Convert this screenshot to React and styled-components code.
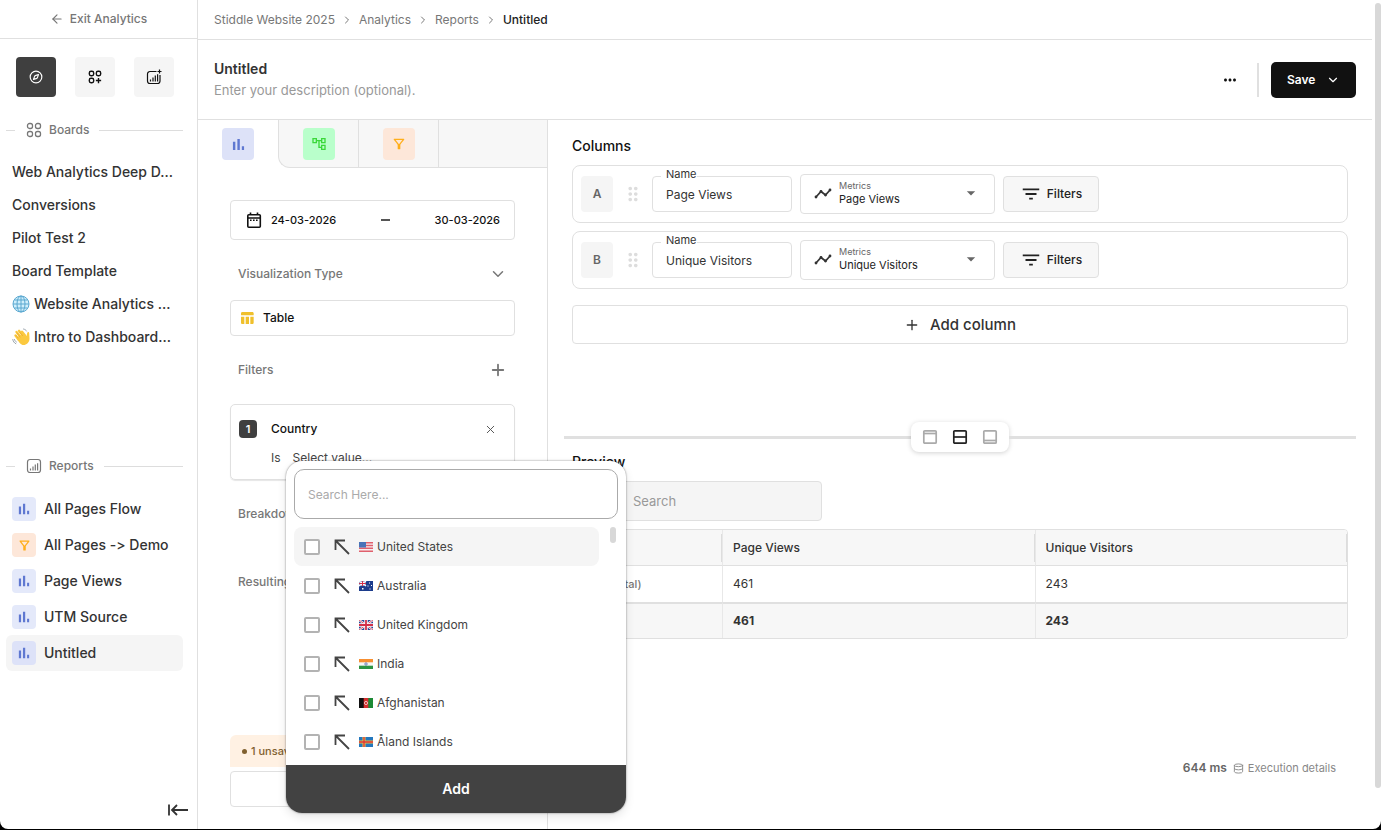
import { useState } from "react";
import styled, { createGlobalStyle } from "styled-components";
import {
  MdOutlineFilterAlt,
  MdOutlineAccountTree,
  MdTableChart,
  MdDragIndicator,
  MdFilterList,
  MdArrowDropDown,
  MdMoreHoriz,
  MdSearch,
} from "react-icons/md";
import { ArrowLeft, ChevronDown, ChevronRight, Compass, Database, Plus, X } from "lucide-react";

const GlobalStyle = createGlobalStyle`
  * {
    box-sizing: border-box;
  }
  body {
    margin: 0;
    background: #000;
    color: #333;
    font-family: Inter, "Liberation Sans", sans-serif;
    font-size: 12px;
    font-variant-ligatures: no-contextual;
    line-height: 20px;
  }
  button, input, select {
    font: inherit;
    color: inherit;
    margin: 0;
  }
  button {
    padding: 0;
    border: none;
    background: none;
    cursor: pointer;
  }
  input, select {
    min-width: 0;
    padding: 0;
    border: none;
    outline: none;
    background: transparent;
  }
  a {
    color: inherit;
    text-decoration: none;
  }
  ul, ol {
    list-style: none;
    margin: 0;
    padding: 0;
  }
  h1, h2, h3, p {
    margin: 0;
  }
  svg {
    display: block;
    flex-shrink: 0;
  }
`;

const Shell = styled.div`
  display: flex;
  min-height: calc(100vh - 1px);
  background: #fff;
  border-radius: 0 0 8px 8px;
`;

/* ---------- sidebar ---------- */

const Sidebar = styled.aside`
  display: flex;
  flex-direction: column;
  flex: 0 0 198px;
  border-right: 1px solid #e0e0e0;
`;

const ExitLink = styled.a`
  display: flex;
  align-items: center;
  justify-content: center;
  gap: 6px;
  height: 39px;
  border-bottom: 1px solid #e0e0e0;
  color: #777;
  font-weight: 500;
`;

const QuickNav = styled.nav`
  display: flex;
  justify-content: space-between;
  padding: 18px 23px 18px 16px;
`;

const QuickButton = styled.button`
  display: flex;
  align-items: center;
  justify-content: center;
  width: 40px;
  height: 40px;
  border-radius: 4px;
  background: ${(props) => (props.$active ? "#3f3f3f" : "#f5f5f5")};
  color: ${(props) => (props.$active ? "#fff" : "#111")};
`;

const SideSection = styled.section`
  flex: 1;
  padding: 5px 14px 0 6px;
`;

const SideHeading = styled.h2`
  display: flex;
  align-items: center;
  margin-bottom: 15px;
  color: #777;
  font-size: 12px;
  font-weight: 500;
  &::before {
    content: "";
    width: 9px;
    margin-right: 11px;
    border-top: 1px solid #ddd;
  }
  &::after {
    content: "";
    flex: 1;
    margin-left: 10px;
    border-top: 1px solid #ddd;
  }
  svg {
    margin-right: 7px;
  }
`;

const BoardLink = styled.a`
  display: flex;
  align-items: center;
  gap: 4px;
  height: 33px;
  padding: 0 6px;
  font-size: 14px;
  font-weight: 500;
  white-space: nowrap;
`;

const ReportLink = styled.a`
  display: flex;
  align-items: center;
  gap: 8px;
  height: 36px;
  padding: 0 6px;
  border-radius: 6px;
  background: ${(props) => (props.$active ? "#f5f5f5" : "transparent")};
  font-size: 14px;
  font-weight: 500;
  white-space: nowrap;
`;

const tones = {
  blue: ["#e4e9fa", "#5f78d1"],
  indigo: ["#dde2f8", "#5f78d1"],
  green: ["#b9ffcb", "#3ad83a"],
  orange: ["#fde7d9", "#ffae1a"],
};

const IconBadge = styled.span`
  display: flex;
  align-items: center;
  justify-content: center;
  width: ${(props) => (props.$large ? "32px" : "24px")};
  height: ${(props) => (props.$large ? "32px" : "24px")};
  border-radius: 4px;
  background: ${(props) => tones[props.$tone][0]};
  color: ${(props) => tones[props.$tone][1]};
`;

const CollapseButton = styled.button`
  align-self: flex-end;
  margin: 15px 8px 11px;
`;

/* ---------- header ---------- */

const Content = styled.div`
  display: flex;
  flex-direction: column;
  flex: 1;
  min-width: 0;
`;

const Breadcrumbs = styled.nav`
  border-bottom: 1px solid #e0e0e0;
  color: #777;
  ol {
    display: flex;
    align-items: center;
    height: 39px;
    padding: 0 16px;
  }
  li {
    display: flex;
    align-items: center;
  }
  svg {
    margin: 0 6px;
  }
`;

const Crumb = styled.a`
  color: ${(props) => (props.$current ? "#222" : "#777")};
  font-weight: ${(props) => (props.$current ? 500 : 400)};
`;

const ReportHeader = styled.header`
  display: flex;
  align-items: center;
  height: 80px;
  padding: 0 16px;
  border-bottom: 1px solid #e0e0e0;
`;

const TitleBlock = styled.div`
  display: flex;
  flex-direction: column;
  flex: 1;
`;

const Title = styled.h1`
  font-size: 14px;
  font-weight: 600;
`;

const Description = styled.input`
  width: 100%;
  height: 22px;
  font-size: 13px;
  &::placeholder {
    color: #999;
    opacity: 1;
  }
`;

const HeaderDivider = styled.span`
  width: 2px;
  height: 34px;
  margin: 0 12px 0 18px;
  background: #e0e0e0;
`;

const SaveButton = styled.button`
  display: flex;
  align-items: center;
  justify-content: space-between;
  width: 85px;
  height: 36px;
  padding: 0 16px;
  border-radius: 5px;
  background: #111;
  color: #fff;
  font-weight: 600;
`;

const Workspace = styled.div`
  display: flex;
  flex: 1;
`;

/* ---------- settings panel ---------- */

const Settings = styled.section`
  display: flex;
  flex-direction: column;
  flex: 0 0 350px;
  border-right: 1px solid #e0e0e0;
`;

const Tabs = styled.div`
  display: flex;
  height: 48px;
`;

const InactiveTabs = styled.div`
  display: flex;
  flex: 1;
  border-left: 1px solid #e0e0e0;
  border-bottom: 1px solid #e0e0e0;
  border-bottom-left-radius: 12px;
  background: #f7f7f7;
`;

const Tab = styled.button`
  display: flex;
  align-items: center;
  justify-content: center;
  width: 80px;
  border-right: ${(props) => (props.$active ? "none" : "1px solid #e0e0e0")};
`;

const SettingsBody = styled.div`
  display: flex;
  flex-direction: column;
  flex: 1;
  padding: 32px 32px 22px;
`;

const DateBox = styled.button`
  display: flex;
  align-items: center;
  height: 40px;
  padding: 0 14px;
  border: 1px solid #e0e0e0;
  border-radius: 4px;
  color: #111;
  font-size: 11px;
  font-weight: 500;
  svg {
    margin-right: 8px;
  }
`;

const Dash = styled.span`
  width: 9px;
  height: 2px;
  margin: 0 auto;
  background: #555;
`;

const SectionHead = styled.div`
  display: flex;
  align-items: center;
  justify-content: space-between;
  height: 28px;
  margin: ${(props) => props.$space};
  padding: 0 8px;
  color: #777;
  h3 {
    font-size: 12px;
    font-weight: 500;
  }
`;

const VisualButton = styled.button`
  display: flex;
  align-items: center;
  gap: 8px;
  height: 36px;
  padding: 0 8px;
  border: 1px solid #e0e0e0;
  border-radius: 4px;
  color: #111;
  font-weight: 500;
`;

const FilterCard = styled.div`
  position: relative;
  height: 76px;
  padding: 14px 17px 0 8px;
  border: 1px solid #e0e0e0;
  border-radius: 5px;
  box-shadow: 0 1px 1px rgba(0, 0, 0, 0.1);
`;

const FilterTop = styled.div`
  display: flex;
  align-items: center;
  color: #111;
  font-weight: 500;
  button {
    margin-left: auto;
    color: #555;
  }
`;

const FilterNumber = styled.span`
  width: 18px;
  height: 18px;
  margin-right: 14px;
  border-radius: 4px;
  background: #3f3f3f;
  color: #fff;
  font-size: 11px;
  font-weight: 600;
  line-height: 18px;
  text-align: center;
`;

const FilterRule = styled.div`
  display: flex;
  gap: 12px;
  padding: 9px 0 0 32px;
  color: #444;
`;

const Unsaved = styled.p`
  display: flex;
  align-items: center;
  gap: 4px;
  margin-top: auto;
  padding: 6px 12px;
  border-radius: 6px 6px 0 0;
  background: #fff1e3;
  color: #80602f;
  font-size: 11px;
  font-weight: 500;
  &::before {
    content: "";
    width: 5px;
    height: 5px;
    border-radius: 50%;
    background: currentColor;
  }
`;

const DiscardButton = styled.button`
  height: 36px;
  margin-top: 4px;
  border: 1px solid #e0e0e0;
  border-radius: 4px;
  font-weight: 500;
`;

/* ---------- country popover ---------- */

const Popover = styled.div`
  position: absolute;
  top: 56px;
  left: 55px;
  z-index: 10;
  width: 340px;
  padding-top: 8px;
  border-radius: 16px;
  background: #fff;
  box-shadow: 0 0 2px rgba(0, 0, 0, 0.5), 0 4px 10px rgba(0, 0, 0, 0.1);
  overflow: hidden;
`;

const PopoverSearch = styled.input`
  display: block;
  width: calc(100% - 16px);
  height: 50px;
  margin: 0 8px 8px;
  padding: 0 13px;
  border: 1px solid #aaa;
  border-radius: 10px;
  &::placeholder {
    color: #aaa;
    opacity: 1;
  }
`;

const OptionArea = styled.div`
  display: flex;
  justify-content: space-between;
  padding: 0 10px 4px 8px;
`;

const Options = styled.ul`
  flex: 1;
  margin-right: 11px;
`;

const Option = styled.label`
  display: flex;
  align-items: center;
  height: 39px;
  padding: 0 10px;
  border-radius: 8px;
  background: ${(props) => (props.$hover ? "#f5f5f5" : "transparent")};
  color: #444;
  cursor: pointer;
  input {
    appearance: none;
    width: 16px;
    height: 16px;
    margin-right: 14px;
    border: 2px solid #b3b3b3;
    border-radius: 2px;
    background: #fff;
  }
  input:checked {
    background: #3f3f3f;
  }
`;

const OptionName = styled.span`
  display: flex;
  align-items: center;
  gap: 4px;
  margin-left: 9px;
`;

const Thumb = styled.span`
  width: 6px;
  height: ${(props) => props.$height};
  border-radius: 3px;
  background: #d8d8d8;
`;

const AddButton = styled.button`
  width: 100%;
  height: 48px;
  background: #424242;
  color: #fff;
  font-size: 14px;
  font-weight: 600;
`;

/* ---------- columns ---------- */

const Builder = styled.main`
  display: flex;
  flex-direction: column;
  flex: 1;
  min-width: 0;
`;

const Columns = styled.section`
  display: flex;
  flex-direction: column;
  padding: 16px 24px 78px;
`;

const Heading = styled.h2`
  margin-bottom: 9px;
  color: #111;
  font-size: 14px;
  font-weight: 500;
`;

const ColumnRow = styled.div`
  display: flex;
  align-items: center;
  gap: 8px;
  height: 58px;
  margin-bottom: 8px;
  padding: 0 8px;
  border: 1px solid #e0e0e0;
  border-radius: 8px;
`;

const Letter = styled.span`
  width: 32px;
  border-radius: 4px;
  background: #f5f5f5;
  color: #666;
  font-weight: 600;
  line-height: 36px;
  text-align: center;
`;

const DragHandle = styled.button`
  display: flex;
  align-items: center;
  justify-content: center;
  width: 23px;
  color: #ddd;
`;

const NameField = styled.div`
  position: relative;
  width: 140px;
  label {
    position: absolute;
    top: -10px;
    left: 9px;
    padding-left: 5px;
    background: #fff;
    font-size: 11px;
    line-height: 16px;
  }
  input {
    width: 100%;
    height: 36px;
    padding: 0 13px;
    border: 1px solid #e0e0e0;
    border-radius: 4px;
  }
`;

const MetricField = styled.div`
  display: flex;
  align-items: center;
  width: 195px;
  height: 40px;
  padding: 0 13px 2px;
  border: 1px solid #e0e0e0;
  border-radius: 4px;
`;

const MetricText = styled.div`
  display: flex;
  flex-direction: column;
  flex: 1;
  margin-left: 7px;
  label {
    color: #666;
    font-size: 9px;
    line-height: 12px;
  }
  select {
    appearance: none;
    height: 14px;
    color: #222;
    font-size: 11px;
    line-height: 14px;
  }
`;

const FiltersButton = styled.button`
  display: flex;
  align-items: center;
  justify-content: center;
  gap: 5px;
  width: 96px;
  height: 36px;
  border: 1px solid #e0e0e0;
  border-radius: 4px;
  background: #f7f7f7;
  color: #222;
  font-weight: 500;
`;

const AddColumn = styled.button`
  display: flex;
  align-items: center;
  justify-content: center;
  gap: 10px;
  height: 39px;
  margin-top: 8px;
  border: 1px solid #e0e0e0;
  border-radius: 4px;
  font-size: 15px;
  font-weight: 500;
`;

const Splitter = styled.div`
  display: flex;
  align-items: center;
  height: 30px;
  margin: 0 16px;
  &::before,
  &::after {
    content: "";
    flex: 1;
    height: 3px;
    background: #e0e0e0;
  }
`;

const LayoutToggle = styled.div`
  display: flex;
  align-items: center;
  gap: 14px;
  height: 30px;
  padding: 0 11px;
  border-radius: 8px;
  background: #fff;
  box-shadow: 0 1px 5px rgba(0, 0, 0, 0.18);
`;

const ToggleButton = styled.button`
  color: ${(props) => (props.$active ? "#222" : "#aaa")};
`;

/* ---------- preview ---------- */

const Preview = styled.section`
  display: flex;
  flex-direction: column;
  flex: 1;
  padding: 0 24px 51px;
`;

const TableSearch = styled.div`
  display: flex;
  align-items: center;
  gap: 16px;
  width: 250px;
  height: 40px;
  margin-bottom: 8px;
  padding: 0 24px;
  border: 1px solid #e0e0e0;
  border-radius: 4px;
  background: #f5f5f5;
  color: #999;
  font-size: 13px;
  input::placeholder {
    color: #999;
    opacity: 1;
  }
`;

const Results = styled.table`
  width: 100%;
  table-layout: fixed;
  border: 1px solid #e0e0e0;
  border-radius: 4px;
  border-spacing: 0;
  overflow: hidden;
  th,
  td {
    height: 36px;
    padding: 0 10px;
    text-align: left;
  }
  th:first-child {
    width: 149px;
  }
  th + th,
  td + td {
    border-left: 1px solid #e8e8e8;
  }
  thead th {
    position: relative;
    background: #f7f7f7;
    border-bottom: 1px solid #e0e0e0;
    font-weight: 500;
  }
  thead th::after {
    content: "";
    position: absolute;
    top: 4px;
    right: 0;
    width: 1px;
    height: 28px;
    background: #ddd;
  }
  tbody td:first-child {
    color: #777;
    font-size: 11px;
    font-weight: 500;
  }
  tfoot td {
    background: #f7f7f7;
    border-top: 2px solid #e0e0e0;
    font-weight: 700;
  }
`;

const Execution = styled.div`
  display: flex;
  align-items: center;
  justify-content: flex-end;
  margin-top: auto;
  padding-right: 12px;
  color: #666;
  strong {
    font-weight: 600;
  }
  button {
    display: flex;
    align-items: center;
    gap: 4px;
    margin-left: 6px;
    color: #888;
    font-size: 11px;
  }
`;

const Scrollbar = styled.div`
  display: flex;
  flex: 0 0 9px;
  justify-content: flex-end;
  align-items: flex-start;
  padding-top: 3px;
`;

const PageThumb = styled(Thumb)`
  height: calc(100vh - 45px);
`;

/* ---------- drawings ---------- */

const BarsIcon = ({ size = 13 }) => (
  <svg width={size} height={size} viewBox="0 0 14 14" fill="currentColor">
    <path d="M1 4h2.6v9H1zM5.8 1h2.6v12H5.8zM10.6 9h2.4v4h-2.4z" />
  </svg>
);

const BoardsIcon = ({ size = 16, plus }) => (
  <svg width={size} height={size} viewBox="0 0 16 16" fill="none" stroke="currentColor" strokeWidth={plus ? 1.6 : 1.3}>
    <rect x="1.5" y="1.5" width="5" height="5" rx="2" />
    <rect x="9.5" y="1.5" width="5" height="5" rx="2" />
    <rect x="1.5" y="9.5" width="5" height="5" rx="2" />
    {plus ? <path d="M12 9v6M9 12h6" /> : <rect x="9.5" y="9.5" width="5" height="5" rx="2" />}
  </svg>
);

const ReportsIcon = ({ size = 16, plus }) => (
  <svg width={size} height={size} viewBox="0 0 16 16" fill="none" stroke="currentColor" strokeWidth="1.2">
    {plus ? (
      <path d="M10.5 2.500H4a2.500 2.500 0 0 0-2.500 2.500v7A2.500 2.500 0 0 0 4 14.500h7.500A2.500 2.500 0 0 0 14 12V6M13.500 .5v4M11.500 2.500h4" />
    ) : (
      <rect x="1.500" y="1.500" width="13" height="13" rx="2.500" />
    )}
    <path d="M4.500 10.500v2M7 8.500v4M9.300 6.500v6M11.600 5.200v7.300" />
  </svg>
);

const CalendarIcon = () => (
  <svg width="18" height="18" viewBox="0 0 18 18" fill="none" stroke="currentColor" strokeWidth="1.6">
    <rect x="2.800" y="3.800" width="12.500" height="12.500" rx="1" />
    <path d="M3 7h12M5.500 1.500v2.500M12.500 1.500v2.500" />
    <path d="M5 9.300h8" strokeDasharray="1.600 1.400" />
  </svg>
);

const CollapseIcon = () => (
  <svg width="22" height="16" viewBox="0 0 22 16" fill="none" stroke="#333" strokeWidth="1.800">
    <path d="M2 2.500v11M21 8H5.500M10 3L5 8l5 5" />
  </svg>
);

const NorthWestIcon = () => (
  <svg width="16" height="16" viewBox="0 0 16 16" fill="none" stroke="#444" strokeWidth="1.800">
    <path d="M1.500 11V1.500H11M1.500 1.500L15 15" />
  </svg>
);

const TrendIcon = () => (
  <svg width="18" height="16" viewBox="0 0 18 16" fill="none" stroke="#333" strokeWidth="1.700">
    <path d="M2 12l5-5.500 4.500 3.500L16 5" />
    <g fill="#333" stroke="none">
      <circle cx="2" cy="12" r="1.400" />
      <circle cx="7" cy="6.500" r="1.400" />
      <circle cx="11.500" cy="10" r="1.400" />
      <circle cx="16" cy="5" r="1.400" />
    </g>
  </svg>
);

const PaneIcon = ({ line }) => (
  <svg width="16" height="16" viewBox="0 0 16 16" fill="none" stroke="currentColor" strokeWidth="1.700">
    <rect x="1.800" y="1.800" width="12.400" height="12.400" rx="1" />
    <path d={`M2 ${line}h12`} />
  </svg>
);

const GlobeEmoji = () => (
  <svg width="18" height="18" viewBox="0 0 18 18" fill="none" stroke="#5ba8d0" strokeWidth="1">
    <circle cx="9" cy="9" r="8" fill="#cfeefb" />
    <ellipse cx="9" cy="9" rx="4" ry="8" />
    <path d="M9 1v16M1 9h16M2.500 5h13M2.500 13h13" />
  </svg>
);

const WaveEmoji = () => (
  <svg width="18" height="18" viewBox="0 0 18 18" fill="none" strokeLinecap="round">
    <path d="M6.500 11.500L3.500 7.500M9 9.500L4.500 4M11 7.500L7 2.800M13 7.500L10 3.800" stroke="#fbc93f" strokeWidth="2.400" />
    <path d="M4.500 9.500L11 5.500l3.500 2.500.7-3c.4-1.400 2-1 2 .3l.3 5.200c0 4-3 6.500-6 6.500-2.500 0-4.500-2-7-7.500z" fill="#fbc93f" />
    <path d="M6 10L4 7.300M8 9L5 5M10.500 7.500L7.500 4" stroke="#e3a02c" strokeWidth=".6" />
    <path d="M.8 11.500c.3 2 1.500 3.500 3 4.200M2.500 11.500c.3 1.200 1 2 1.800 2.500M11.500 1c1.500.3 2.500 1 3 2" stroke="#9aa5ad" />
  </svg>
);

const flags = {
  us: (
    <>
      <rect width="14" height="10" fill="#f7eef0" />
      <path d="M0 .7h14M0 3.500h14M0 6.300h14M0 9.200h14" stroke="#e0606d" strokeWidth="1.400" />
      <rect width="7" height="5.500" fill="#4973b8" />
    </>
  ),
  au: (
    <>
      <rect width="14" height="10" fill="#1c3c8c" />
      <path d="M0 0l7 5M7 0L0 5" stroke="#fff" strokeWidth="1.400" />
      <path d="M3.500 0v5M0 2.500h7" stroke="#fff" strokeWidth="2" />
      <path d="M3.500 0v5M0 2.500h7" stroke="#d2304a" strokeWidth="1" />
      <path d="M3 7h1.500v1.500H3zM10 1.500h1v1h-1zM8.500 4.500h1v1h-1zM12 4h1v1h-1zM10.500 7.500h1v1h-1z" fill="#fff" />
    </>
  ),
  gb: (
    <>
      <rect width="14" height="10" fill="#2a4593" />
      <path d="M0 0l14 10M14 0L0 10" stroke="#fff" strokeWidth="2.200" />
      <path d="M0 0l14 10M14 0L0 10" stroke="#d2304a" strokeWidth=".8" />
      <path d="M7 0v10M0 5h14" stroke="#fff" strokeWidth="3.400" />
      <path d="M7 0v10M0 5h14" stroke="#d2304a" strokeWidth="1.800" />
    </>
  ),
  in: (
    <>
      <rect width="14" height="10" fill="#f7f7f7" />
      <rect width="14" height="3.300" fill="#f78f31" />
      <rect y="6.700" width="14" height="3.300" fill="#2c9443" />
      <circle cx="7" cy="5" r="1.200" fill="none" stroke="#3b55a5" strokeWidth=".7" />
    </>
  ),
  af: (
    <>
      <rect width="14" height="10" fill="#d32f2f" />
      <rect width="4.700" height="10" fill="#111" />
      <rect x="9.300" width="4.700" height="10" fill="#1c8a35" />
      <circle cx="7" cy="5" r="1.600" fill="none" stroke="#fbd9d9" strokeWidth=".8" />
    </>
  ),
  ax: (
    <>
      <rect width="14" height="10" fill="#2477bd" />
      <path d="M5 0v10M0 5h14" stroke="#f8c03c" strokeWidth="3" />
      <path d="M5 0v10M0 5h14" stroke="#d8343d" strokeWidth="1.300" />
    </>
  ),
};

const Flag = ({ code }) => (
  <svg width="14" height="10" viewBox="0 0 14 10">
    {flags[code]}
  </svg>
);

/* ---------- data ---------- */

const boards = [
  { name: "Web Analytics Deep D..." },
  { name: "Conversions" },
  { name: "Pilot Test 2" },
  { name: "Board Template" },
  { name: "Website Analytics ...", icon: <GlobeEmoji /> },
  { name: "Intro to Dashboard...", icon: <WaveEmoji /> },
];

const reports = [
  { name: "All Pages Flow", tone: "blue" },
  { name: "All Pages -> Demo", tone: "orange" },
  { name: "Page Views", tone: "blue" },
  { name: "UTM Source", tone: "blue" },
  { name: "Untitled", tone: "indigo", active: true },
];

const crumbs = ["Stiddle Website 2025", "Analytics", "Reports", "Untitled"];

const countries = [
  { code: "us", name: "United States" },
  { code: "au", name: "Australia" },
  { code: "gb", name: "United Kingdom" },
  { code: "in", name: "India" },
  { code: "af", name: "Afghanistan" },
  { code: "ax", name: "Åland Islands" },
];

const columns = [
  { letter: "A", metric: "Page Views", total: 461 },
  { letter: "B", metric: "Unique Visitors", total: 243 },
];

const CountryPopover = () => {
  const [checked, setChecked] = useState([]);
  const toggle = (code) =>
    setChecked((prev) => (prev.includes(code) ? prev.filter((c) => c !== code) : [...prev, code]));

  return (
    <Popover>
      <PopoverSearch aria-label="Search countries" placeholder="Search Here..." />
      <OptionArea>
        <Options>
          {countries.map((country, index) => (
            <li key={country.code}>
              <Option $hover={index === 0}>
                <input
                  type="checkbox"
                  checked={checked.includes(country.code)}
                  onChange={() => toggle(country.code)}
                />
                <NorthWestIcon />
                <OptionName>
                  <Flag code={country.code} />
                  {country.name}
                </OptionName>
              </Option>
            </li>
          ))}
        </Options>
        <Thumb $height="16px" />
      </OptionArea>
      <AddButton>Add</AddButton>
    </Popover>
  );
};

const App = () => {
  return (
    <>
      <GlobalStyle />
      <Shell>
        <Sidebar>
          <ExitLink href="#">
            <ArrowLeft size={14} />
            Exit Analytics
          </ExitLink>
          <QuickNav>
            <QuickButton $active aria-label="Explore">
              <Compass size={14} />
            </QuickButton>
            <QuickButton aria-label="New board">
              <BoardsIcon size={14} plus />
            </QuickButton>
            <QuickButton aria-label="New report">
              <ReportsIcon plus />
            </QuickButton>
          </QuickNav>
          <SideSection>
            <SideHeading>
              <BoardsIcon />
              Boards
            </SideHeading>
            {boards.map((board) => (
              <BoardLink href="#" key={board.name}>
                {board.icon}
                {board.name}
              </BoardLink>
            ))}
          </SideSection>
          <SideSection>
            <SideHeading>
              <ReportsIcon />
              Reports
            </SideHeading>
            {reports.map((report) => (
              <ReportLink href="#" key={report.name} $active={report.active}>
                <IconBadge $tone={report.tone}>
                  {report.tone === "orange" ? <MdOutlineFilterAlt size={15} /> : <BarsIcon size={12} />}
                </IconBadge>
                {report.name}
              </ReportLink>
            ))}
          </SideSection>
          <CollapseButton aria-label="Collapse sidebar">
            <CollapseIcon />
          </CollapseButton>
        </Sidebar>

        <Content>
          <Breadcrumbs>
            <ol>
              {crumbs.map((crumb, index) => (
                <li key={crumb}>
                  {index > 0 && <ChevronRight size={12} />}
                  <Crumb href="#" $current={index === crumbs.length - 1}>
                    {crumb}
                  </Crumb>
                </li>
              ))}
            </ol>
          </Breadcrumbs>
          <ReportHeader>
            <TitleBlock>
              <Title>Untitled</Title>
              <Description aria-label="Description" placeholder="Enter your description (optional)." />
            </TitleBlock>
            <button aria-label="More">
              <MdMoreHoriz size={18} color="#111" />
            </button>
            <HeaderDivider />
            <SaveButton>
              Save
              <ChevronDown size={14} />
            </SaveButton>
          </ReportHeader>

          <Workspace>
            <Settings>
              <Tabs>
                <Tab $active aria-label="Insights">
                  <IconBadge $large $tone="indigo">
                    <BarsIcon />
                  </IconBadge>
                </Tab>
                <InactiveTabs>
                  <Tab aria-label="Flows">
                    <IconBadge $large $tone="green">
                      <MdOutlineAccountTree size={16} />
                    </IconBadge>
                  </Tab>
                  <Tab aria-label="Funnels">
                    <IconBadge $large $tone="orange">
                      <MdOutlineFilterAlt size={16} />
                    </IconBadge>
                  </Tab>
                </InactiveTabs>
              </Tabs>
              <SettingsBody>
                <DateBox>
                  <CalendarIcon />
                  24-03-2026
                  <Dash />
                  30-03-2026
                </DateBox>
                <SectionHead $space="20px 0 12px">
                  <h3>Visualization Type</h3>
                  <button aria-label="Choose visualization">
                    <ChevronDown size={18} />
                  </button>
                </SectionHead>
                <VisualButton>
                  <MdTableChart size={16} color="#f0c02c" />
                  Table
                </VisualButton>
                <SectionHead $space="20px 0">
                  <h3>Filters</h3>
                  <button aria-label="Add filter">
                    <Plus size={18} strokeWidth={2.4} />
                  </button>
                </SectionHead>
                <FilterCard>
                  <FilterTop>
                    <FilterNumber>1</FilterNumber>
                    Country
                    <button aria-label="Remove filter">
                      <X size={13} strokeWidth={1.8} />
                    </button>
                  </FilterTop>
                  <FilterRule>
                    <span>Is</span>
                    <button>Select value...</button>
                  </FilterRule>
                  <CountryPopover />
                </FilterCard>
                <SectionHead $space="20px 0 40px">
                  <h3>Breakdown</h3>
                </SectionHead>
                <SectionHead $space="0">
                  <h3>Resulting Events</h3>
                </SectionHead>
                <Unsaved>1 unsaved change</Unsaved>
                <DiscardButton>Discard</DiscardButton>
              </SettingsBody>
            </Settings>

            <Builder>
              <Columns>
                <Heading>Columns</Heading>
                {columns.map((column) => (
                  <ColumnRow key={column.letter}>
                    <Letter>{column.letter}</Letter>
                    <DragHandle aria-label="Reorder column">
                      <MdDragIndicator size={22} />
                    </DragHandle>
                    <NameField>
                      <label htmlFor={`name-${column.letter}`}>Name</label>
                      <input id={`name-${column.letter}`} defaultValue={column.metric} />
                    </NameField>
                    <MetricField>
                      <TrendIcon />
                      <MetricText>
                        <label htmlFor={`metric-${column.letter}`}>Metrics</label>
                        <select id={`metric-${column.letter}`} defaultValue={column.metric}>
                          <option>{column.metric}</option>
                        </select>
                      </MetricText>
                      <MdArrowDropDown size={20} color="#666" />
                    </MetricField>
                    <FiltersButton>
                      <MdFilterList size={22} />
                      Filters
                    </FiltersButton>
                  </ColumnRow>
                ))}
                <AddColumn>
                  <Plus size={16} />
                  Add column
                </AddColumn>
              </Columns>
              <Splitter>
                <LayoutToggle>
                  <ToggleButton aria-label="Preview only">
                    <PaneIcon line={4.5} />
                  </ToggleButton>
                  <ToggleButton $active aria-label="Split view">
                    <PaneIcon line={8} />
                  </ToggleButton>
                  <ToggleButton aria-label="Columns only">
                    <PaneIcon line={11.5} />
                  </ToggleButton>
                </LayoutToggle>
              </Splitter>
              <Preview>
                <Heading>Preview</Heading>
                <TableSearch>
                  <MdSearch size={20} />
                  <input aria-label="Search table" placeholder="Search" />
                </TableSearch>
                <Results>
                  <thead>
                    <tr>
                      <th>Event</th>
                      {columns.map((column) => (
                        <th key={column.letter}>{column.metric}</th>
                      ))}
                    </tr>
                  </thead>
                  <tbody>
                    <tr>
                      <td>Date (total)</td>
                      {columns.map((column) => (
                        <td key={column.letter}>{column.total}</td>
                      ))}
                    </tr>
                  </tbody>
                  <tfoot>
                    <tr>
                      <td>Total</td>
                      {columns.map((column) => (
                        <td key={column.letter}>{column.total}</td>
                      ))}
                    </tr>
                  </tfoot>
                </Results>
                <Execution>
                  <strong>644 ms</strong>
                  <button>
                    <Database size={11} />
                    Execution details
                  </button>
                </Execution>
              </Preview>
            </Builder>
          </Workspace>
        </Content>
        <Scrollbar>
          <PageThumb />
        </Scrollbar>
      </Shell>
    </>
  );
};

export default App;
